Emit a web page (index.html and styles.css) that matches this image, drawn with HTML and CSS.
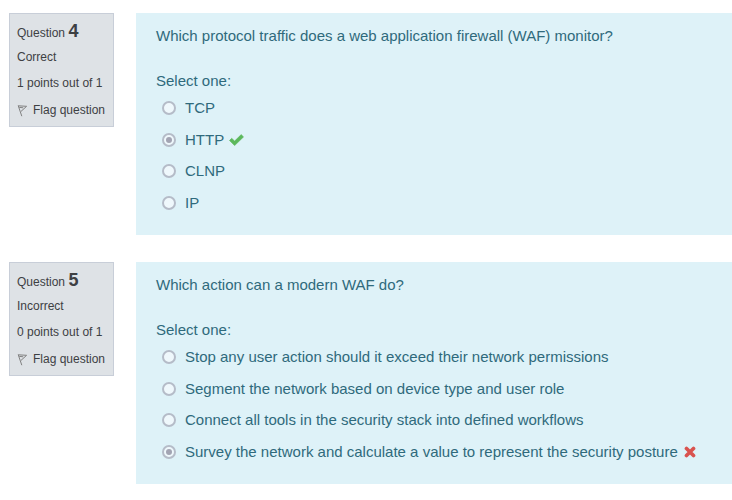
FILE: index.html
```html
<!DOCTYPE html>
<html lang="en">
<head>
<meta charset="utf-8">
<title>Quiz review</title>
<link rel="stylesheet" href="styles.css">
</head>
<body>
<svg class="defs" width="0" height="0">
  <symbol id="flag" viewBox="0 0 11 13"><path d="M1.2 1.6L4.8 12.2M1.2 1.8L9.6 2.3L4 7.4M2.2 3.3L6.2 3.8" fill="none" stroke="#808080" stroke-width="1"/></symbol>
  <symbol id="check" viewBox="0 0 15 12"><path d="M.5 6.5L2.7 4.3L5.6 7.1L12.2.6L14.5 2.9L5.6 11.6Z" fill="#5cb85c" stroke="#5cb85c" stroke-width=".6" stroke-linejoin="round"/></symbol>
  <symbol id="cross" viewBox="0 0 12 12"><path d="M2.5 2.5L9.5 9.5M9.5 2.5L2.5 9.5" fill="none" stroke="#d9534f" stroke-width="3.7" stroke-linecap="round"/></symbol>
</svg>
<main class="quiz">
  <section class="question">
    <aside class="info">
      <h3 class="number">Question <b>4</b></h3>
      <div class="state">Correct</div>
      <div class="grade">1 points out of 1</div>
      <div class="flag"><svg width="11" height="13"><use href="#flag"/></svg>Flag question</div>
    </aside>
    <div class="content">
      <p class="text">Which protocol traffic does a web application firewall (WAF) monitor?</p>
      <p class="prompt">Select one:</p>
      <div class="answers">
        <label class="answer"><span class="radio"></span>TCP</label>
        <label class="answer"><span class="radio checked"></span>HTTP<svg class="check" width="15" height="12"><use href="#check"/></svg></label>
        <label class="answer"><span class="radio"></span>CLNP</label>
        <label class="answer"><span class="radio"></span>IP</label>
      </div>
    </div>
  </section>
  <section class="question">
    <aside class="info">
      <h3 class="number">Question <b>5</b></h3>
      <div class="state">Incorrect</div>
      <div class="grade">0 points out of 1</div>
      <div class="flag"><svg width="11" height="13"><use href="#flag"/></svg>Flag question</div>
    </aside>
    <div class="content">
      <p class="text">Which action can a modern WAF do?</p>
      <p class="prompt">Select one:</p>
      <div class="answers">
        <label class="answer"><span class="radio"></span>Stop any user action should it exceed their network permissions</label>
        <label class="answer"><span class="radio"></span>Segment the network based on device type and user role</label>
        <label class="answer"><span class="radio"></span>Connect all tools in the security stack into defined workflows</label>
        <label class="answer"><span class="radio checked"></span>Survey the network and calculate a value to represent the security posture<svg class="cross" width="12" height="12"><use href="#cross"/></svg></label>
      </div>
    </div>
  </section>
</main>
</body>
</html>
```

FILE: styles.css
```css
* { box-sizing: border-box; }
body { margin: 0; background: #fff; font-family: "Liberation Sans", Arial, sans-serif; }
p, h3 { margin: 0; }
.defs { display: block; }
.quiz { display: grid; gap: 27px; padding: 13px 0 0 9px; }
.question { display: grid; grid-template-columns: 105px 1fr; column-gap: 22px; align-items: start; }
.info { height: 114px; padding: 7px; border: 1px solid #c8ced8; background: #dee2e6; color: #3d4043; font-size: 12px; line-height: 16px; white-space: nowrap; }
.number { font-size: 12px; font-weight: 400; line-height: 20px; }
.number b { font-size: 18px; }
.state { margin-top: 6px; }
.grade { margin-top: 10px; }
.flag { display: flex; align-items: center; gap: 5px; margin-top: 11px; }
.content { height: 222px; padding: 11px 20px 0; background: #def2f8; color: #2f6a7c; font-size: 15px; line-height: 23px; white-space: nowrap; }
.prompt { margin-top: 22px; }
.answers { display: grid; grid-template-rows: repeat(4, 31.67px); padding: 4px 0 0 6px; }
.answer { display: flex; align-items: center; height: 23px; }
.radio { display: grid; place-items: center; width: 14px; height: 14px; margin: 1px 9px 0 0; border: 2px solid #b5bcc8; border-radius: 50%; background: #eff8fc; }
.checked::before { content: ""; width: 6px; height: 6px; border-radius: 50%; background: #a2a4b3; }
.check { margin: 1px 0 0 5px; }
.cross { margin: 2px 0 0 6px; }
```
